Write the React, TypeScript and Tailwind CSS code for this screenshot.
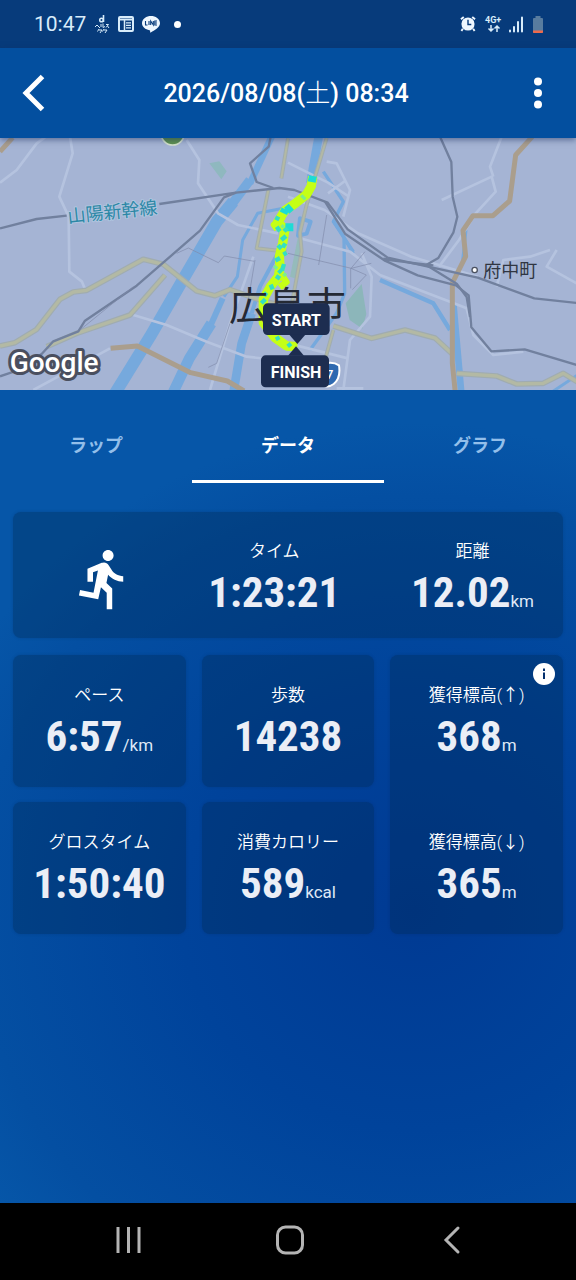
import { useState } from "react";
import type { ReactNode } from "react";
import { MdDirectionsRun } from "react-icons/md";

type StatProps = {
  label: string;
  value: string;
  unit?: string;
};

type CardProps = {
  className?: string;
  children: ReactNode;
};

const tabs = ["ラップ", "データ", "グラフ"];

function StatusBar() {
  return (
    <div className="flex h-12 items-center justify-between bg-[#073b7b] pr-8 pl-[34px] text-[#d8ecfa]">
      <div className="flex items-center gap-2">
        <span className="text-[21px] leading-6">10:47</span>
        <svg
          className="h-5 w-4"
          viewBox="0 0 16 20"
          fill="none"
          stroke="currentColor"
          strokeWidth="1"
        >
          <path d="M9.500 1v7" strokeWidth="1.600" />
          <circle cx="7.500" cy="6" r="1.800" strokeWidth="1.500" />
          <path d="M1 13l2-2 3 3M7 10v3M9 9.500v4l2-1M12 10.500h2.500l-2.500 3M13.500 12l1.500 2M5 15l-1.500 2.500M5 16h3l-2 3M10 15l-1.500 2.500M10 16h3l-2 3" />
        </svg>
        <svg className="h-4 w-4" viewBox="0 0 16 16" fill="none" stroke="currentColor">
          <rect x="1" y="1" width="14" height="14" rx="1" strokeWidth="2" />
          <path d="M1 3.500h14" strokeWidth="2" />
          <path d="M6.500 4v10" strokeWidth="1.500" />
          <path d="M8 6.800h5M8 9.300h5M8 11.800h5" strokeWidth="1.300" />
        </svg>
        <svg className="h-[18px] w-[18px]" viewBox="0 0 18 18">
          <path
            d="M9 1C4.600 1 0 3.700 0 8.300c0 3.600 3.400 6.300 7.500 6.900.8.1.7.8.6 1.700 0 .7.400.8 1 .4C12 15.800 18 12.500 18 8.300 18 3.700 13.400 1 9 1z"
            fill="#eef7ff"
          />
          <path
            d="M3.500 6v4h2M7 6v4M8.700 10V6l2.600 4V6M15 6h-2.200v4H15M12.800 8H15"
            fill="none"
            stroke="#073b7b"
            strokeWidth="1.100"
          />
        </svg>
        <span className="ml-1.5 h-[7px] w-[7px] rounded-full bg-white" />
      </div>

      <div className="flex items-center gap-1">
        <svg className="mr-1 h-4 w-4" viewBox="0 0 17 17">
          <circle cx="8.500" cy="8.500" r="7" fill="#eef7ff" />
          <path d="M8.500 4v5H12" fill="none" stroke="#073b7b" strokeWidth="1.500" />
          <path
            d="M1 3.500L4 1M16 3.500L13 1M3 13.500L1.500 16M14 13.500l1.500 2.500"
            stroke="#eef7ff"
            strokeWidth="2"
          />
        </svg>
        <svg className="h-[18px] w-[20px]" viewBox="0 0 20 18">
          <text x="1" y="8" fill="currentColor" fontSize="9" fontWeight="700">
            4G+
          </text>
          <path
            d="M7 10v6M4.500 13.500L7 16l2.500-2.500M13 17v-6M10.500 13.500L13 11l2.500 2.500"
            fill="none"
            stroke="currentColor"
            strokeWidth="1.500"
          />
        </svg>
        <svg
          className="h-[17px] w-4"
          viewBox="0 0 16 17"
          stroke="currentColor"
          strokeWidth="2"
          strokeLinecap="round"
        >
          <path d="M2 14.500v1M6 11v4.500M10 6v9.500M14 1.500v14" />
        </svg>
        <svg className="ml-1 h-[17px] w-3" viewBox="0 0 12 17">
          <path d="M3.500 0h5v2H10q1 0 1 1v13q0 1-1 1H2q-1 0-1-1V3q0-1 1-1h1.500z" fill="#587c9f" />
          <path d="M1 14.500h10V16q0 1-1 1H2q-1 0-1-1z" fill="#ef6a4c" />
        </svg>
      </div>
    </div>
  );
}

function Header() {
  return (
    <header className="relative z-10 flex h-[90px] items-center justify-between bg-[#034f9f] px-5 text-white shadow-[0_2px_6px_rgba(20,40,90,0.5)]">
      <button type="button" aria-label="戻る" className="w-8">
        <svg className="h-10 w-7" viewBox="0 0 28 40" fill="none" stroke="white" strokeWidth="5">
          <path d="M22.500 3.500L6 20l16.500 16.500" />
        </svg>
      </button>
      <h1 className="pt-[2px] text-[25px] leading-8 font-medium">
        2026/08/08(<span className="font-light">土</span>) 08:34
      </h1>
      <button type="button" aria-label="メニュー" className="flex w-9 justify-center">
        <svg className="h-8 w-2" viewBox="0 0 8 32" fill="white">
          <circle cx="4" cy="4.500" r="4" />
          <circle cx="4" cy="16" r="4" />
          <circle cx="4" cy="27.500" r="4" />
        </svg>
      </button>
    </header>
  );
}

function RouteMap() {
  return (
    <svg
      className="block h-[252px] w-full bg-[#a5b4d4]"
      viewBox="0 24 1728 756"
      preserveAspectRatio="xMidYMid slice"
      fill="none"
      strokeLinejoin="round"
    >
      {/* parks */}
      <path d="M628 100l30-6 22 30-16 24z" fill="#8fb8bf" />
      <path d="M1085 462l-48 58 12 50 38 26 12-44z" fill="#8cb6ba" />
      <path d="M870 440l24-120 14 6-20 120z" fill="#95bbbb" />

      {/* rivers */}
      <g stroke="#76a9dd">
        <path d="M815 20l-65 140" strokeWidth="20" />
        <path d="M750 150l-60 80" strokeWidth="28" />
        <path d="M700 215l-50 60L560 430 450 620 345 790" strokeWidth="36" />
        <path d="M668 505l-40 90" strokeWidth="18" />
        <path d="M634 580l-66 105-50 105" strokeWidth="32" />
        <path d="M672 500l40-60 16-110 45-80 100-20" strokeWidth="9" />
        <path d="M755 550l-30 90-25 150" strokeWidth="26" />
        <path d="M956 20l-25 140" strokeWidth="26" />
        <path d="M860 320l-80 150-25 80" strokeWidth="12" />
        <path d="M970 125l60 90-30 60 60 90" strokeWidth="10" />
        <path d="M1000 270l60 100M1032 320l2 170-24 60-80 110" strokeWidth="10" />
        <path d="M1140 450l160 70 50 80" strokeWidth="13" />
        <path d="M1360 520l24 270" strokeWidth="20" />
        <path d="M1650 790l90-60M1398 300l-10 90" strokeWidth="9" />
        <path d="M900 265l32 10-12 36-26 6z" strokeWidth="12" />
      </g>

      {/* minor roads */}
      <g stroke="#b5c3df" strokeWidth="8">
        <path d="M0 158l50-38 60-80 25-18M210 20l8 50-40 130 28 60 2 165 38 30 8 20M560 30l38 60-4 70 60 90 60 35 120 25" />
        <path d="M400 555l100 30 120 50 120 45 90 10M330 655l-110 60-120 65M630 780l60-200 70-200" />
        <path d="M864 98l120 60 60 40M980 95l30 5 40 80-20 80M984 190l55-40M864 200l110 40 100 70 160 70 200 60" />
        <path d="M900 325l150 40 90 70 210 80 50 20 20 80 60 60 90-10M1085 370l30 70-5 120-60 70-20 150" />
        <path d="M1325 210l150-70 12 45-60 65-50 80-60 80M1505 20l-35 90 10 30M1490 470l20-80 80-10 60-20M1670 360l-30 50 90 50M864 640l180 45M1010 775h80" />
      </g>

      {/* main roads */}
      <g stroke="#a0acb0" strokeWidth="17">
        <path d="M0 648l45-10 65-40 70-90 40-22 40-5 170-93 60 15 100 80 55 14 45-18 100 34 60 15" />
        <path d="M140 650l90-40 160-55 105-120" />
        <path d="M1000 588l115 37 100-25 90 24 50 46M1370 730l120 8 60 24 80-2 60-30 50 30" />
        <path d="M805 180l-35 175 90 10M864 25l-20 120M980 24l-60 200-20 85 5 55-30 160M1000 600l-25 90" strokeWidth="12" />
      </g>
      <g stroke="#b3b9a4" strokeWidth="10">
        <path d="M0 648l45-10 65-40 70-90 40-22 40-5 170-93 60 15 100 80 55 14 45-18 100 34 60 15" />
        <path d="M140 650l90-40 160-55 105-120" />
        <path d="M1000 588l115 37 100-25 90 24 50 46M1370 730l120 8 60 24 80-2 60-30 50 30" />
        <path d="M805 180l-35 175 90 10M864 25l-20 120M980 24l-60 200-20 85 5 55-30 160M1000 600l-25 90" strokeWidth="6" />
      </g>
      <g stroke="#aa9e8d" strokeWidth="15">
        <path d="M1597 20l-50 55-18 138-50 44h-60l-30 44 8 78-40 80v240l10 100" />
        <path d="M332 655l80-7 160 80 110 25 50 30M0 65l38-42" />
      </g>

      {/* railways */}
      <g stroke="#71809e" strokeWidth="7">
        <path d="M0 295l110-28 90-10M478 222l230-34 130-14 45 6 100 38 60 80 120 85 270 60 170 62 165 18" />
        <path d="M812 20l-6 30-56 50 20 56 50 18M708 188l-36 14-72 100-190 165-155 105-20 32-75 30-35 38-60 45-65 22" />
        <path d="M1320 20l34 76 4 104 14 60-12 48-45 76-38 22" />
        <path d="M975 215l60 96 118 80 100 45 115 30 38 30 8 96 60 72 100-6 160 48" />
        <path d="M1150 386l130 20 90 55 30 40 10 60M1150 388l150 18" />
      </g>
      <g stroke="#808bab" strokeWidth="2">
        <path d="M530 370l35-16 90 44 18-20 90 16M765 390l-20 120M690 580l-40 120-25 12M240 600l160-130M864 370l190 45 60-15M980 255l-24 150M1052 415v60M1095 365l-42 50 46 20-42 44" />
      </g>
      <circle cx="518" cy="10" r="35" fill="#5f9250" stroke="#d5e3cc" strokeWidth="5" />

      {/* road shield */}
      <path
        d="M975 700q25-6 42 6 6 38-16 56-22 16-40-2z"
        fill="#2e69b0"
        stroke="white"
        strokeWidth="6"
      />
      <text x="978" y="748" fill="white" fontSize="39" fontWeight="500">
        7
      </text>

      {/* labels */}
      <text
        x="205"
        y="279"
        transform="rotate(-6 205 279)"
        fill="#2c88a6"
        stroke="#afc5df"
        strokeWidth="6"
        paintOrder="stroke"
        fontSize="54"
      >
        山陽新幹線
      </text>
      <circle cx="1424" cy="420" r="8" fill="white" stroke="#4b5261" strokeWidth="4" />
      <text x="1450" y="441" fill="#303642" fontSize="54">
        府中町
      </text>

      {/* recorded track */}
      <g strokeLinecap="butt">
        <path
          d="M938 140l-4 28-14 25-35 28-30 20-22 35 22 22-7 42-10 40 2 30-5 30-24 30-21 38v70l35 45 35 25 32 2"
          stroke="#c5ff16"
          strokeWidth="28"
        />
        <path d="M835 420l24 36-20 16M850 260l-28 24 10 14" stroke="#c5ff16" strokeWidth="20" />
        <path d="M939 138l-4 18M874 230l-14 12M868 280v24M856 238l-6 12" stroke="#1edbd5" strokeWidth="24" />
        <path
          d="M826 262l12 6M830 290l10 14M852 304l10-10M858 318l-14 12M834 346l10 10M848 352l8-12M850 374l10-6M826 392l14-8M852 402l-6 20M828 438l12 8M836 420l8 8M812 464l6 14M800 488l-8 10M784 520l12-12M830 620l6 10M864 640l8 10"
          stroke="#35dfc2"
          strokeWidth="13"
        />
        <path d="M904 196l12 12M844 286l8 6M822 408l10 8M858 430l-8 8" stroke="#7cf08a" strokeWidth="10" />
      </g>

      <text x="687" y="569" fill="#252a35" fontSize="117">
        広島市
      </text>

      {/* start / finish pins */}
      <g fill="#1d2d50" stroke="none">
        <rect x="789" y="520" width="200" height="95" rx="14" />
        <path d="M868 614h48l-24 28z" />
        <rect x="783" y="676" width="204" height="96" rx="14" />
        <path d="M864 677h48l-24-28z" />
      </g>
      <g fill="white" fontSize="48" fontWeight="700" textAnchor="middle">
        <text x="889" y="588">START</text>
        <text x="888" y="744">FINISH</text>
      </g>

      <text
        x="29"
        y="726"
        fill="white"
        stroke="#4a4f5f"
        strokeWidth="18"
        paintOrder="stroke"
        fontSize="84"
        fontWeight="500"
      >
        Google
      </text>
    </svg>
  );
}

function Card({ className = "", children }: CardProps) {
  return (
    <div className={`rounded-lg bg-[#002850]/35 shadow-[0_0_3px_rgba(0,40,80,0.25)] ${className}`}>
      {children}
    </div>
  );
}

function Stat({ label, value, unit }: StatProps) {
  return (
    <div className="flex flex-col items-center text-white">
      <span className="text-[17px] leading-6 font-[350]">{label}</span>
      <p className="flex h-14 items-baseline">
        <span className="font-['Roboto_Condensed','Liberation_Sans_Narrow',Roboto,sans-serif] text-[43px] leading-[58px] font-bold text-[#ebeef6]">
          {value}
        </span>
        {unit && <span className="text-[17px] leading-5 text-[#dfe8f6]">{unit}</span>}
      </p>
    </div>
  );
}

export default function App() {
  const [active, setActive] = useState("データ");

  return (
    <div className="flex min-h-screen flex-col bg-[#0450a2] font-[Roboto,'Noto_Sans_CJK_JP',sans-serif]">
      <StatusBar />
      <Header />
      <RouteMap />

      <main className="flex-1 bg-[radial-gradient(ellipse_90%_60%_at_72%_64%,#003a93_0%,#00439b_45%,#044fa2_85%,#0656a8_100%)]">
        {/* tabs */}
        <div role="tablist" className="grid grid-cols-3">
          {tabs.map((tab) => (
            <button
              key={tab}
              type="button"
              role="tab"
              aria-selected={tab === active}
              onClick={() => setActive(tab)}
              className={`h-[93px] border-b-[3px] pt-5 text-[18px] font-bold ${
                tab === active ? "border-white text-white" : "border-transparent text-[#93bfea]"
              }`}
            >
              {tab}
            </button>
          ))}
        </div>

        <div className="mx-[13px] mt-[29px] flex flex-col gap-[17px]">
          {/* summary */}
          <Card className="grid h-[126px] grid-cols-[33fr_29fr_38fr] items-center pt-2">
            <MdDirectionsRun size={66} className="mx-auto text-white" />
            <Stat label="タイム" value="1:23:21" />
            <div className="pl-7">
              <Stat label="距離" value="12.02" unit="km" />
            </div>
          </Card>

          <div className="grid grid-cols-3 grid-rows-[132px_132px] gap-x-4 gap-y-[15px]">
            <Card className="pt-7">
              <Stat label="ペース" value="6:57" unit="/km" />
            </Card>
            <Card className="pt-7">
              <Stat label="歩数" value="14238" />
            </Card>
            <Card className="relative row-span-2 grid grid-rows-2 gap-[15px]">
              <button
                type="button"
                aria-label="獲得標高について"
                className="absolute top-2 right-2 h-[22px] w-[22px]"
              >
                <svg viewBox="0 0 22 22">
                  <circle cx="11" cy="11" r="11" fill="white" />
                  <path d="M11 5.500v2.500M11 9.500v6.500" stroke="#04306e" strokeWidth="2" />
                </svg>
              </button>
              <div className="pt-7">
                <Stat label="獲得標高(↑)" value="368" unit="m" />
              </div>
              <div className="pt-7">
                <Stat label="獲得標高(↓)" value="365" unit="m" />
              </div>
            </Card>
            <Card className="pt-7">
              <Stat label="グロスタイム" value="1:50:40" />
            </Card>
            <Card className="pt-7">
              <Stat label="消費カロリー" value="589" unit="kcal" />
            </Card>
          </div>
        </div>
      </main>

      {/* system navigation */}
      <nav className="flex h-[77px] items-center justify-between bg-black pr-27 pb-1 pl-28">
        <button type="button" aria-label="履歴" className="w-8">
          <svg className="mx-auto h-8 w-8" viewBox="0 0 32 32" stroke="#b4b4b4" strokeWidth="3">
            <path d="M6 3v26M16.500 3v26M27 3v26" />
          </svg>
        </button>
        <button type="button" aria-label="ホーム" className="w-8">
          <svg className="mx-auto h-8 w-8" viewBox="0 0 32 32" fill="none" stroke="#b4b4b4" strokeWidth="3">
            <rect x="3.500" y="3" width="25" height="26" rx="8" />
          </svg>
        </button>
        <button type="button" aria-label="戻る" className="w-8">
          <svg
            className="mx-auto h-8 w-8"
            viewBox="0 0 32 32"
            fill="none"
            stroke="#b4b4b4"
            strokeWidth="3"
            strokeLinecap="round"
          >
            <path d="M22 4L10 16l12 12" />
          </svg>
        </button>
      </nav>
    </div>
  );
}
